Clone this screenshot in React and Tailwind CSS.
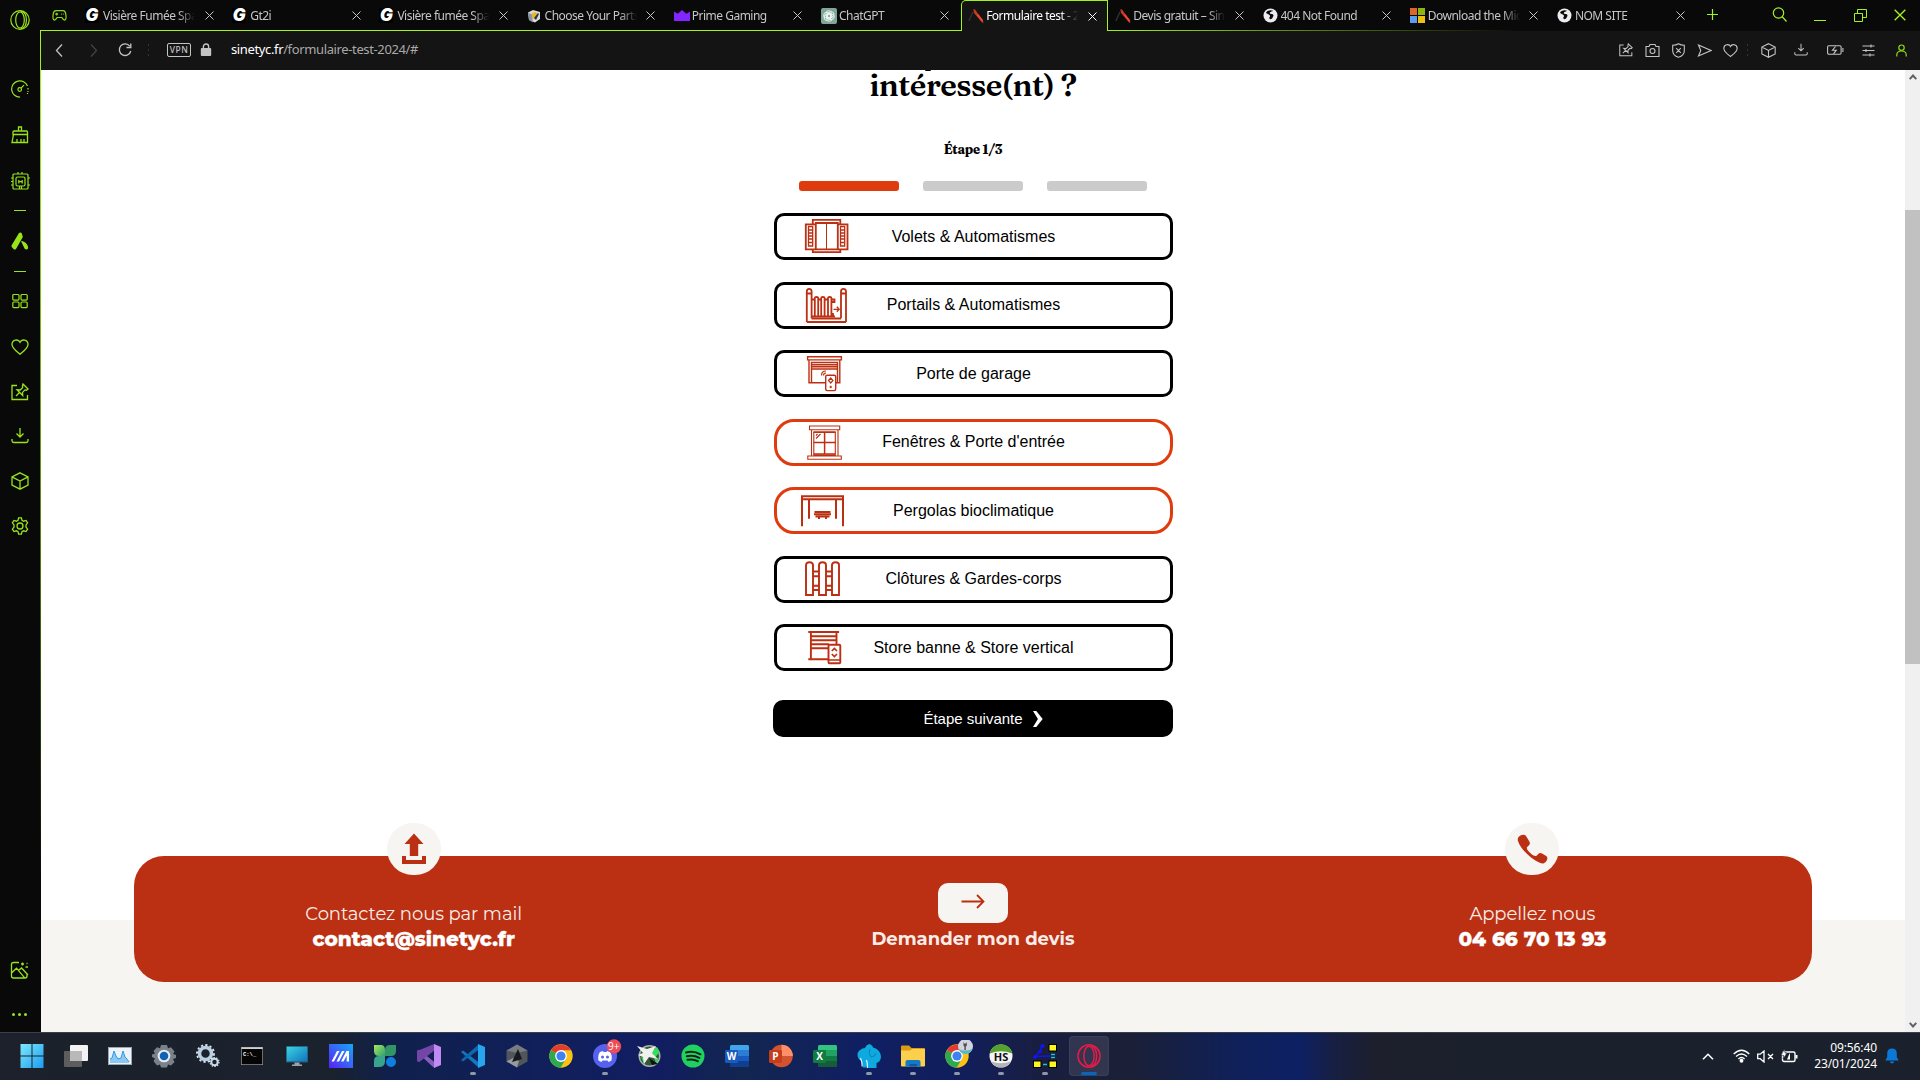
import React from "react";

const RED = "#bb2f12";

/* ---------- line icons ---------- */
function Line({ size = 18, sw = 1, vb = 18, className = "", children }) {
  return (
    <svg width={size} height={size} viewBox={`0 0 ${vb} ${vb}`} fill="none" stroke="currentColor" strokeWidth={sw} className={`shrink-0 ${className}`}>
      {children}
    </svg>
  );
}
const OperaMark = ({ w = 20, h = 20, sw = 1.2 }) => (
  <svg width={w} height={h} viewBox="0 0 20 20" preserveAspectRatio="none" fill="none" stroke="currentColor" strokeWidth={sw} className="shrink-0">
    <ellipse cx="10" cy="10" rx="9.2" ry="9.3" />
    <ellipse cx="10" cy="10" rx="4.3" ry="8.2" />
    <path d="M11 1.2c3.5.8 5.4 4.4 5.4 8.8s-1.9 8-5.4 8.8" />
  </svg>
);
const Pin = ({ size = 18 }) => (
  <Line size={size} sw={1.3}>
    <path d="M6 2.500H1v14h15.500V12" />
    <path d="M12 1l5 5-1.500 1.200-1.500-.3-2.500 2.500.2 3.100-5.700-5.700 3.200.2 2.500-2.500-.3-1.500zM8.500 9.500L5 13" />
  </Line>
);
const Download = ({ size = 18 }) => (
  <Line size={size} sw={1.3}><path d="M9 1v8.500M5.500 6.500L9 10l3.500-3.500M1 12v1.800q0 1.700 1.700 1.700h12.600q1.700 0 1.700-1.700V12" /></Line>
);
const Cube = ({ size = 18 }) => (
  <Line size={size} sw={1.3}><path d="M9 .8l8 4v8.400l-8 4-8-4V4.800zM1 4.800l8 4.200 8-4.200M9 9v8" /></Line>
);
const Heart = ({ size = 18 }) => (
  <Line size={size} sw={1.3}><path d="M9 4.200C7.500.8 1 1.200 1 6.500 1 10.500 6 13.500 9 16.200c3-2.700 8-5.700 8-9.700 0-5.300-6.500-5.700-8-2.300z" /></Line>
);
const Close = ({ s = 9 }) => (
  <svg width={s} height={s} viewBox="0 0 9 9" stroke="currentColor" strokeWidth="1" fill="none" className="shrink-0"><path d="M.5.5l8 8M8.500.5l-8 8" /></svg>
);

/* ---------- tab favicons ---------- */
const GIcon = () => (
  <span className="flex h-[15px] w-[14px] items-center justify-center bg-black font-['Inter','Liberation_Sans',sans-serif] text-[17px] leading-none font-black text-white italic">G</span>
);
const PartsIcon = () => (
  <svg width="14" height="14" viewBox="0 0 14 14"><path d="M1 3.500l5-2.500 7 2v7l-5 3.500-6-2.500z" fill="#d9dbe0" /><path d="M1 3.500l4 2 1 8-4-2.500z" fill="#8b93a5" /><path d="M5 4l4-1 2 3-3 4-3-1z" fill="#e6b91e" /><path d="M7 9l4-5 1 1-3 6z" fill="#2b3350" /></svg>
);
const Crown = () => (
  <svg width="16" height="11" viewBox="0 0 17 11" preserveAspectRatio="none"><path d="M0 1.500l3 1.800q1.500.8 2.500-.8L8.500 0l3 2.500q1 1.600 2.500.8l3-1.800V11H0z" fill="#8424ff" /></svg>
);
const Gpt = () => (
  <svg width="16" height="16" viewBox="0 0 16 16"><rect width="16" height="16" rx="2" fill="#7fa798" /><g fill="none" stroke="#eef5f2" strokeWidth=".9"><rect x="5" y="2.700" width="5.400" height="7" rx="2.700" /><rect x="5" y="2.700" width="5.400" height="7" rx="2.700" transform="rotate(60 8 8)" /><rect x="5" y="2.700" width="5.400" height="7" rx="2.700" transform="rotate(120 8 8)" /><rect x="5" y="2.700" width="5.400" height="7" rx="2.700" transform="rotate(180 8 8)" /><rect x="5" y="2.700" width="5.400" height="7" rx="2.700" transform="rotate(240 8 8)" /><rect x="5" y="2.700" width="5.400" height="7" rx="2.700" transform="rotate(300 8 8)" /></g></svg>
);
const Blade = () => (
  <svg width="16" height="16" viewBox="0 0 16 16"><path d="M5 4L.8 13" stroke="#303030" strokeWidth="1.500" /><path d="M5.300 1.200l1.800.2 3.400 5 4.600 5.800.2 3-1.500-1L9 8.500 6 5z" fill="#c43a20" /><path d="M9.500 6.500l5 6.500" stroke="#e8492a" strokeWidth="1.800" /></svg>
);
const Globe = () => (
  <svg width="15" height="15" viewBox="0 0 15 15"><circle cx="7.500" cy="7.500" r="7" fill="#ececf0" /><path d="M3 4.500c1 2 3.800 1.500 4 3.500.2 1-1 1-.6 2.400.6 1.300 2.600.7 3-.4.600-1.500 1.600-2 .8-3.300-1.200-1.300-3.400-.2-3.400-1.700 0-1.400 2.400-1.300 3.400-2.200-2.400-1.200-5.600-.6-7.200 1.700z" fill="#0a0a0a" /></svg>
);
const MsIcon = () => (
  <span className="grid h-[15px] w-[15px] grid-cols-2 grid-rows-2 gap-px">
    <i className="bg-[#dd6527]" /><i className="bg-[#8db510]" /><i className="bg-[#5a9cf0]" /><i className="bg-[#f0be12]" />
  </span>
);

const TABS = [
  ["Visière Fumée Spa", GIcon], ["Gt2i", GIcon], ["Visière fumée Spa", GIcon], ["Choose Your Parts", PartsIcon],
  ["Prime Gaming", Crown], ["ChatGPT", Gpt], ["Formulaire test - 2", Blade, true], ["Devis gratuit – Sin", Blade],
  ["404 Not Found", Globe], ["Download the Mic", MsIcon], ["NOM SITE", Globe],
];

function Tab({ label, Icon, active }) {
  return (
    <div className={active
      ? "flex h-[31px] w-[147.200px] shrink-0 items-center rounded-tl-[5px] border-t border-r border-l border-[#a4f31c] bg-[#141414] pl-[6px] text-white"
      : "flex h-[31px] w-[147.200px] shrink-0 items-center pl-[7px] text-[#c6c6c6]"}>
      <span className="flex w-[18px] shrink-0 items-center">{<Icon />}</span>
      <span className="w-[96px] overflow-hidden mask-r-from-78% mask-r-to-96% text-[12px] tracking-[-0.500px] whitespace-nowrap">{label}</span>
      <span className="ml-[5.500px] flex"><Close /></span>
    </div>
  );
}

function TabStrip() {
  return (
    <div className="flex h-[31px] shrink-0 bg-[linear-gradient(to_right,#a4f31c_0,#a4f31c_1066px,transparent_1480px)] bg-[length:100%_1px] bg-bottom bg-no-repeat text-[#a4f31c]">
      <div className="flex h-[30px] w-[37px] shrink-0 items-center justify-center">
        <svg width="15" height="11" viewBox="0 0 15 11" fill="none" stroke="#8ada17" strokeWidth="1.200"><path d="M4 .7h7c2 0 2.500 1.300 2.800 3.500.3 2 .5 4.300-.3 5.300-1.500 1.500-2.500-.5-3.700-2H5.200C4 9 3 11 1.500 9.500.700 8.500.900 6.200 1.200 4.200 1.500 2 2 .700 4 .700z" /><path d="M3.200 4.200h3M4.700 2.800v2.800M9 4.200h.8M10.800 4.200h.8" /></svg>
      </div>
      {TABS.map(([l, I, a], i) => <Tab key={i} label={l} Icon={I} active={a} />)}
      <div className="flex h-[28px] w-[30px] shrink-0 items-center justify-center">
        <Line size={11} vb={11} sw={1.200}><path d="M5.500 0v11M0 5.500h11" /></Line>
      </div>
      <div className="ml-auto flex h-[30px]">
        <span className="flex w-10 items-center justify-center pr-px pb-px"><Line size={15} vb={15} sw={1.200}><circle cx="6.500" cy="6" r="5.200" /><path d="M10 9.500l4.500 5" /></Line></span>
        <span className="flex w-10 items-end justify-center pb-[9px]"><i className="h-px w-3 bg-[#a4f31c]" /></span>
        <span className="flex w-10 items-center justify-center"><Line size={13} vb={13} sw={1}><path d="M.5 4.500h8v8h-8zM3.500 4.500v-4h9v8h-4" /></Line></span>
        <span className="flex w-10 items-center justify-center"><Close s={12} /></span>
      </div>
    </div>
  );
}

const Dots = () => <i className="flex flex-col gap-[3px]"><b className="h-[2px] w-px bg-[#333]" /><b className="h-[2px] w-px bg-[#333]" /><b className="h-[2px] w-px bg-[#333]" /></i>;

function AddressBar() {
  const cell = "flex h-full items-center justify-center shrink-0";
  return (
    <div className="flex h-[39px] shrink-0 items-center bg-[#141414] pb-px text-[#c4c4c4]">
      <span className={`${cell} w-[36px]`}><Line size={13} vb={13} sw={1.300}><path d="M9 .5L3.500 6.500 9 12.500" /></Line></span>
      <span className={`${cell} w-[32px] text-[#444]`}><Line size={13} vb={13} sw={1.300}><path d="M4 .5l5.500 6L4 12.500" /></Line></span>
      <span className={`${cell} w-[32px]`}><Line size={14} vb={14} sw={1.300}><path d="M11.800 3.200A5.800 5.800 0 1 0 12.800 8M12.800.5v4H8.500" /></Line></span>
      <span className={`${cell} w-[14px]`}><Dots /></span>
      <span className="ml-[12px] flex h-[14px] w-[24px] items-center justify-center rounded-[2px] border border-[#c4c4c4] text-[8.500px] leading-none font-medium tracking-[0.500px]">VPN</span>
      <svg width="12" height="14" viewBox="0 0 12 14" className="ml-[9px]"><rect x=".8" y="5" width="10.400" height="8" rx="1" fill="#c4c4c4" /><path d="M3.400 5.500V3.600a2.600 2.600 0 0 1 5.200 0v1.900" fill="none" stroke="#c4c4c4" strokeWidth="1.400" /></svg>
      <span className="ml-[19px] text-[13px] tracking-[-0.370px] whitespace-nowrap text-[#a9a9a9]"><span className="text-white">sinetyc.fr</span>/formulaire-test-2024/#</span>
      <div className="ml-auto flex h-full items-center pr-px">
        <span className={`${cell} w-[26px]`}><Pin size={14} /></span>
        <span className={`${cell} w-[26px]`}><Line size={15} vb={15} sw={1.100}><path d="M1 3.500h3l1-2h5l1 2h3v10H1z" /><circle cx="7.500" cy="8" r="2.500" /></Line></span>
        <span className={`${cell} w-[26px]`}><Line size={15} vb={15} sw={1.100}><path d="M7.500.8c1.500 1 4 1.500 5.800 1.500v5.500c0 3.500-2.500 5.500-5.800 6.500-3.300-1-5.800-3-5.800-6.500V2.300C3.500 2.300 6 1.800 7.500.8zM5.200 5.200l4.600 4.600M9.800 5.200L5.200 9.800" /></Line></span>
        <span className={`${cell} w-[26px]`}><Line size={15} vb={15} sw={1.100}><path d="M1.500 2l12.500 5.500L1.500 13l2.300-5.500z" /></Line></span>
        <span className={`${cell} w-[26px]`}><Heart size={15} /></span>
        <span className={`${cell} w-[8px]`}><Dots /></span>
        <span className={`${cell} w-[34px]`}><Cube size={15} /></span>
        <span className={`${cell} w-[32px]`}><Download size={14} /></span>
        <span className={`${cell} w-[36px]`}><svg width="17" height="10" viewBox="0 0 17 10" fill="none" stroke="currentColor" strokeWidth="1.100"><rect x=".6" y=".8" width="13.500" height="8.400" rx="1.200" /><path d="M15.900 3v4M8.500 1.500L5.500 5.200h3.800L6.500 8.800" /></svg></span>
        <span className={`${cell} w-[30px]`}><Line size={13} vb={13} sw={1.100}><path d="M.5 2h12M.5 6.500h12M.5 11h12M9 .5v3M4 5v3M8 9.500v3" /></Line></span>
        <span className={`${cell} w-[36px] text-[#8ada17]`}><Line size={13} vb={13} sw={1.200}><circle cx="6.500" cy="3.700" r="2.700" /><path d="M1.800 12.500V11c0-3 2-4 4.700-4s4.700 1 4.700 4v1.500" /></Line></span>
      </div>
    </div>
  );
}

function Sidebar() {
  const c = "flex shrink-0 items-center justify-center pr-px";
  return (
    <aside className="flex w-[40px] shrink-0 flex-col bg-[#090909] text-[#98e41b]">
      <div className={`${c} mb-[26px] h-[40px]`}><OperaMark sw={1.200} /></div>
      <div className={`${c} h-[46px]`}><Line sw={1.200}><path d="M9 17.200A8.200 8.200 0 1 1 16.500 6" /><path d="M17 8v1.500M17 11v1M16.500 13v1" /><circle cx="8.700" cy="9.500" r="1.800" /><path d="M10 8.200l3-3" /></Line></div>
      <div className={`${c} h-[46px]`}><Line sw={1.300}><path d="M7.500 5V1h3v4M3 5h12.500q1 0 1 1v2.500H2V6q0-1 1-1zM2.500 8.500L1 16.500h15.500v-8M6 16.500V13M10 16.500V13M13 16.500V13" /></Line></div>
      <div className={`${c} h-[46px] pl-[2px]`}><Line size={19} vb={19} sw={1.200}><rect x="2" y="2" width="15" height="15" rx="1" /><rect x="5" y="5" width="9" height="9" rx="1.500" /><path d="M7.800 8v3.500M11.200 8v3.500M7.800 9.700h3.400M7 0v2M11 0v2M0 6h2M0 9.500h2M0 13h2M17 6h2M17 13h2M8.500 14v3M10.500 14v3" /></Line></div>
      <div className={`${c} h-[12px]`}><i className="h-px w-3 bg-current" /></div>
      <div className={`${c} h-[50px]`}><svg width="18" height="18" viewBox="0 0 18 18" fill="#98e41b"><path d="M8 1q2-1.200 3 1l.8 3L5 17q-1 1.200-2.500 0L.8 15q-.6-1 0-2z" /><path d="M10 9q3.800 0 6 3.500 1.500 2.500 1 4-1.500 2-3.500 0z" /></svg></div>
      <div className={`${c} h-[10px]`}><i className="h-px w-3 bg-current" /></div>
      <div className={`${c} h-[50px]`}><Line size={16} vb={16} sw={1.200}><rect x=".8" y="1.500" width="6.200" height="5.600" rx="1" /><rect x="9" y="1.500" width="6.200" height="5.600" rx="1" /><rect x=".8" y="9" width="6.200" height="5.600" rx="1" /><rect x="9" y="9" width="6.200" height="5.600" rx="1" /></Line></div>
      <div className={`${c} h-[42px]`}><Heart /></div>
      <div className={`${c} h-[48px]`}><Pin /></div>
      <div className={`${c} h-[40px]`}><Download /></div>
      <div className={`${c} h-[50px]`}><Cube /></div>
      <div className={`${c} h-[40px]`}><Line sw={1.300}><path d="M7 3.300L7.600.8h2.800l.6 2.500 1.500.9 2.500-.8 1.600 2.400L15 7.900v2.200l1.600 2.100-1.600 2.400-2.500-.8-1.500.9-.6 2.500H7.600L7 14.700l-1.500-.9-2.500.8-1.600-2.400L3 10.100V7.900L1.400 5.800 3 3.400l2.500.8z" /><circle cx="9" cy="9" r="3" /></Line></div>
      <div className={`${c} mt-auto h-[52px]`}><Line size={19} vb={19} sw={1.300}><path d="M9 1.500H3.500Q1.500 1.500 1.500 3.500v11.500q0 2 2 2H15q2 0 2-2v-1.500M1.500 12l5-4.800 8 9.500M8.500 9.500l3-2.500 6.500 7M11 3h3M12.500 1.500v3M15.500 6h2.500M16.500 2.500h1" /></Line></div>
      <div className={`${c} h-[36px] gap-[3px]`}><i className="h-[3px] w-[3px] rounded-full bg-current" /><i className="h-[3px] w-[3px] rounded-full bg-current" /><i className="h-[3px] w-[3px] rounded-full bg-current" /></div>
    </aside>
  );
}

/* ---------- product pictograms ---------- */
function Picto({ children, sw = 1.600 }) {
  return <svg width="50" height="37" viewBox="0 0 50 37" fill="none" stroke={RED} strokeWidth={sw}>{children}</svg>;
}
const Shutters = () => (
  <Picto sw={1.800}>
    <path d="M12.800 6V1.900h27.500V6M12.800 31v3.200h27.500V31M15.800 31.300V5h22v26.300z" />
    <path d="M26.500 5v26" strokeWidth="1" />
    <path d="M15.500 6.300H5.800v25h9.700M38 6.300h9.500v25H38" />
    <path d="M8.500 8.500h4.200v19.500H8.500zM40.500 8.500h4.200v19.500h-4.200zM8.500 12h4M8.500 15h4M8.500 18h4M8.500 21h4M8.500 24.500h4M40.500 12h4M40.500 15h4M40.500 18h4M40.500 21h4M40.500 24.500h4" strokeWidth="1.300" />
  </Picto>
);
const Gate = () => (
  <Picto sw={1.800}>
    <path d="M6.800 35V4.500Q6.800 1.800 9.200 1.800t2.400 2.700v26.800M41 31.300V4.500q0-2.700 2.500-2.700T46 4.500V35M6.800 6.500h5M41 6.500h5M6.800 35H46M11.500 31.500H41" />
    <path d="M14.800 29V11q0-1 1.700-1t1.700 1v18M21.200 29V11q0-1 1.700-1t1.700 1v18M28 29V11q0-1 1.700-1t1.700 1v18M12 12.500h3M18.500 12.500h3M24.500 12.500h3.500M31.500 12.500h3v2.500h-3M12 29.500h23M33 26v3" strokeWidth="1.800" />
    <path d="M33.500 22.300h5.500M36.800 19.800l2.400 2.500-2.400 2.500" strokeWidth="1.300" />
  </Picto>
);
const Garage = () => (
  <Picto sw={1.400}>
    <path d="M7.600 1.700h33.800v3.200H7.600zM9 5v22.700h16.500M39.800 5v22.700h-4M11.500 20V7.500h26V20M11.500 9.700h26M11.500 11.800h26M11.500 14h26M11.500 7.500v20M37.500 14v13.500" />
    <rect x="25.700" y="20.300" width="10" height="15.300" rx="1.500" fill="#fff" />
    <path d="M28.500 25.500l2.200-2.500 2.200 2.500-2.200 2.500zM29.500 32h2.500M30.700 30.800v2.500M21.500 20.500q0-4.500 4.500-4.500M23.500 20.500q0-2.500 2.500-2.500" strokeWidth="1.200" />
  </Picto>
);
const Window = () => (
  <Picto sw={1.100}>
    <path d="M9.500 2h30.200v3.700H9.500zM11.500 5.700v26M38 5.700v26M13.800 31V8h21.500v23zM7.800 32h33.500v3.200H7.800zM16 14.500l4.500-4.500M16 11.500l1.500-1.500" />
    <path d="M24.600 8v22.500M13.800 18.500h21.500M13.800 8.200h21.500M13.800 30h21.500" strokeWidth="1.500" />
  </Picto>
);
const Pergola = () => (
  <Picto sw={2}>
    <path d="M2 34.300V4.200h41v30.100M2 7.300h41M9 8v18.700M36 8v18.700M14.500 20h16M14 22.300h17M15.500 24.500h14M19 24v3M26 24v3" />
  </Picto>
);
const Fence = () => (
  <Picto sw={1.900}>
    <path d="M6 34V4Q6 1.200 9.500 1.200T13 4v30zM19 34V4q0-2.800 3.500-2.800T26 4v30zM32 34V4q0-2.800 3.500-2.800T39 4v30zM13 10.500h6M13 15.200h6M13 24.800h6M13 29h6M26 10.500h6M26 15.200h6M26 24.800h6M26 29h6" />
  </Picto>
);
const Blind = () => (
  <Picto sw={1.900}>
    <path d="M8.300 3h30.800M10.900 3v27.300M36.500 3v12M11 7.200h25.500M11 11.200h25.500M11 15.200h18M11 19.200h17M8.300 30.300H28" />
    <rect x="28.500" y="15.700" width="11.800" height="18.500" rx="1" fill="#fff" />
    <path d="M31.800 22l2.600-2.500L37 22M31.800 25l2.600 2.500L37 25M28.500 31h11.800" strokeWidth="1.700" />
  </Picto>
);

const OPTIONS = [
  ["Volets & Automatismes", Shutters], ["Portails & Automatismes", Gate], ["Porte de garage", Garage],
  ["Fenêtres & Porte d'entrée", Window, true], ["Pergolas bioclimatique", Pergola, true],
  ["Clôtures & Gardes-corps", Fence], ["Store banne & Store vertical", Blind],
];

function Option({ label, Icon, on }) {
  return (
    <button className={on
      ? "grid h-[47px] w-[399px] items-center rounded-[20px] border-3 border-[#e03b0e] bg-white text-black"
      : "grid h-[47px] w-[399px] items-center rounded-[10px] border-3 border-black bg-white text-black"}>
      <span className="col-start-1 row-start-1 ml-[23px] justify-self-start"><Icon /></span>
      <span className="col-start-1 row-start-1 justify-self-center text-[16px] leading-5">{label}</span>
    </button>
  );
}

function ContactCard() {
  const badge = "absolute top-[-33px] left-1/2 flex h-[52px] w-[54px] -translate-x-1/2 items-center justify-center rounded-full bg-[#f7f5f2]";
  return (
    <div className="mx-[93px] -mt-[64px] grid h-[126px] grid-cols-3 rounded-[30px] bg-[#bb2f12] text-center font-['Montserrat','Inter','Liberation_Sans',sans-serif] text-[#f9ede9]">
      <div className="relative pt-[45px]">
        <span className={`${badge} pb-[2px]`}><svg width="26" height="31" viewBox="0 0 26 31" fill={RED}><path d="M13 .5L22.500 11h-5.300v12H8.800V11H3.500zM1 23h4v4h16v-4h4v8H1z" /></svg></span>
        <p className="text-[18px] leading-[26px] font-normal tracking-[-0.080px]">Contactez nous par mail</p>
        <p className="mt-[-1px] text-[20px] leading-[26px] font-extrabold text-white [-webkit-text-stroke:0.300px_white]">contact@sinetyc.fr</p>
      </div>
      <div className="flex flex-col items-center pt-[27px]">
        <span className="flex h-[40px] w-[70px] items-center justify-center rounded-[10px] bg-[#f7f5f2] pb-[3px]"><svg width="24" height="15" viewBox="0 0 24 15" fill="none" stroke={RED} strokeWidth="1.800"><path d="M.5 7.500h22M16 1l6.500 6.500L16 14" /></svg></span>
        <p className="mt-[3px] text-[18px] leading-[26px] font-bold">Demander mon devis</p>
      </div>
      <div className="relative pt-[45px]">
        <span className={badge}><svg width="31" height="30" viewBox="0 0 31 30" fill={RED}><path d="M1.500 3Q4 .5 7 .8q1.500.2 2.500 2l3 5q1 2-.5 3.400l-2 2q-.8 1.500 1.500 4t4.500 4q2.500 1.500 3.800.3l1.700-1.700q1.500-1.300 3.500-.3l4.200 2.500q1.800 1.500.8 4-1 2.500-3.500 3.500-4.500 0-12.500-6Q3.500 15 .8 6.500.5 4.500 1.500 3z" /></svg></span>
        <p className="text-[18px] leading-[26px] font-normal tracking-[-0.080px]">Appellez nous</p>
        <p className="mt-[-1px] text-[20px] leading-[26px] font-extrabold text-white [-webkit-text-stroke:0.300px_white]">04 66 70 13 93</p>
      </div>
    </div>
  );
}

function Page() {
  return (
    <main className="flex grow flex-col overflow-hidden bg-white font-['Liberation_Sans',Arial,sans-serif]">
      <div className="flex h-[850px] shrink-0 flex-col items-center">
        <i className="mr-[90px] h-px w-[6px] rounded-b bg-black" />
        <h1 className="mt-px h-[27px] font-['Fraunces','Lora','Liberation_Serif',serif] text-[31px] leading-[27px] font-semibold tracking-[-0.550px] whitespace-nowrap text-black">intéresse(nt) ?</h1>
        <p className="mt-[40px] h-[20px] font-['Fraunces','Lora','Liberation_Serif',serif] text-[13px] leading-[20px] font-bold tracking-[-0.250px]">Étape 1/3</p>
        <div className="mt-[22px] flex gap-[24px]">
          <i className="h-[10px] w-[100px] rounded-[3px] bg-[#e03b0e]" /><i className="h-[10px] w-[100px] rounded-[3px] bg-[#cbcbcb]" /><i className="h-[10px] w-[100px] rounded-[3px] bg-[#cbcbcb]" />
        </div>
        <div className="mt-[22.400px] ml-px flex flex-col gap-[21.500px]">
          {OPTIONS.map(([l, I, on]) => <Option key={l} label={l} Icon={I} on={on} />)}
        </div>
        <button className="mt-[28.600px] flex h-[37px] w-[400px] items-center justify-center gap-[10px] rounded-[10px] bg-black pt-px pl-[20px] text-[15px] text-white">
          <span>Étape suivante</span>
          <svg width="10" height="16" viewBox="0 0 10 16" fill="#fff"><path d="M0 0h3.300L9.700 8l-6.400 8H0l4.900-8z" /></svg>
        </button>
      </div>
      <div className="h-[112px] bg-[#f7f5f2]"><ContactCard /></div>
    </main>
  );
}

function Scrollbar() {
  return (
    <div className="flex w-[15px] shrink-0 flex-col items-center bg-[#f0f0f0]">
      <svg width="8" height="6" viewBox="0 0 8 6" className="mt-[4px]" fill="none" stroke="#606060" strokeWidth="2"><path d="M.7 5.200L4 1.500l3.300 3.700" /></svg>
      <i className="mt-[130px] h-[454px] w-full bg-[#c1c1c1]" />
      <svg width="8" height="6" viewBox="0 0 8 6" className="mt-auto mb-[4px]" fill="none" stroke="#606060" strokeWidth="2"><path d="M.7.8L4 4.500 7.300.8" /></svg>
    </div>
  );
}

/* ---------- taskbar ---------- */
function App24({ children }) {
  return <svg width="24" height="24" viewBox="0 0 24 24" className="shrink-0">{children}</svg>;
}
const Office = ({ letter, c }) => (
  <App24>
    {letter === "P" ? <><circle cx="12.500" cy="12" r="11.300" fill={c[1]} /><path d="M12.500.7A11.300 11.300 0 0 1 23.800 12H12.500z" fill={c[0]} /></> :
      <><rect x="5" y="1" width="19" height="22" rx="1.500" fill={c[2]} /><path d="M6.500 1h16Q24 1 24 2.500V6.500H5V2.500Q5 1 6.500 1z" fill={c[0]} /><path d="M5 6.500h19V12H5z" fill={c[1]} /><path d="M5 17h19v4.500q0 1.500-1.500 1.500h-16Q5 23 5 21.500z" fill={c[3]} /></>}
    <rect x="0" y="6" width="13" height="13" rx="1.200" fill={c[4]} />
    <text x="6.500" y="16" textAnchor="middle" fontSize="10" fontWeight="700" fill="#fff" fontFamily="Open Sans, sans-serif">{letter}</text>
  </App24>
);
const Chrome = ({ avatar }) => (
  <svg width="32" height="32" viewBox="-4 -4 32 32" className="shrink-0">
    <circle cx="12" cy="12" r="11.700" fill="#fbc116" />
    <path d="M12 12L1.900 6.200A11.700 11.700 0 0 1 22.100 6.200H12z" fill="#e33b2e" />
    <path d="M1.900 6.200A11.700 11.700 0 0 0 11.500 23.700L17 14.800 12 12z" fill="#2da94f" />
    <circle cx="12" cy="12" r="5.900" fill="#fff" /><circle cx="12" cy="12" r="4.600" fill="#3e82f1" />
    {avatar && <><circle cx="20.500" cy="2.500" r="7.500" fill="#cfd3e2" /><path d="M13.500 5q6.500 3 14 0-2.500 5-7 5t-7-5z" fill="#59b9bb" /><path d="M18.500-2l.8 1.500h1.700l.8-1.500v3.500l-1 1v3.500h-1.400v-3.500l-.9-1z" fill="#544a3d" /></>}
  </svg>
);

const APPS = [
  [<App24><defs><linearGradient id="win" x1="0" y1="0" x2="1" y2="1"><stop offset="0" stopColor="#7ee8fb" /><stop offset="1" stopColor="#1a9cf2" /></linearGradient></defs><path d="M.5 0h11v11.500H.5zM12.500 0h11v11.500h-11zM.5 12.500h11V24H.5zM12.500 12.500h11V24h-11z" fill="url(#win)" /></App24>],
  [<App24><rect x="0" y="7" width="18" height="16" rx="1" fill="#5d5d5d" /><rect x="6" y="1" width="18" height="16" rx="1" fill="#f3f3f3" /><rect x="6" y="7" width="12" height="10" fill="#b9b9b9" /></App24>],
  [<App24><rect x="0" y="3" width="24" height="18" fill="#9aa8b4" /><rect x="1" y="4" width="22" height="16" fill="#eef3f7" /><path d="M2 19v-4l2-1 2-7 2 5 2 3 3-1 2-7 2 6 2 2 2 4z" fill="#8cc8f2" /><path d="M2 15l2-1 2-7 2 5 2 3 3-1 2-7 2 6 2 2 2 3" fill="none" stroke="#2e9be5" strokeWidth="1" /></App24>],
  [<App24><path d="M9 1h6l1 3.200 3-1 3.500 4.300L21 10l3 1v3l-3 1 1.500 3-3.500 3.500-3-1L15 23.500H9L8 20.500l-3 1L1.500 17 3 14.500 0 13v-2.500L3 9.500 1.500 7 5 3.200l3 1z" fill="#79828b" /><circle cx="12" cy="12" r="6.300" fill="#e9edf0" /><circle cx="12" cy="12" r="4.300" fill="#0f63b5" /></App24>],
  [<App24><g fill="none"><circle cx="9.500" cy="9.500" r="6" stroke="#b9d0e0" strokeWidth="3.500" /><circle cx="9.500" cy="9.500" r="8.500" stroke="#dce8f0" strokeWidth="1.800" strokeDasharray="2.200 2.200" /><circle cx="18.500" cy="18" r="3.200" stroke="#c8dae6" strokeWidth="2" /><circle cx="18.500" cy="18" r="4.500" stroke="#dce8f0" strokeWidth="1.200" strokeDasharray="1.400 1.400" /></g></App24>],
  [<App24><rect x="1" y="3" width="22" height="18" fill="#9b9b9b" /><rect x="1.700" y="5" width="20.600" height="15.300" fill="#050505" /><rect x="1.700" y="3.500" width="20.600" height="1.300" fill="#dedede" /><text x="3" y="12" fontSize="5.500" fill="#fff" fontFamily="Liberation Mono, monospace" fontWeight="700">C:\_</text></App24>],
  [<App24><defs><linearGradient id="desk" x1="0" y1="0" x2="1" y2="1"><stop offset="0" stopColor="#3bd3e4" /><stop offset="1" stopColor="#0f74bd" /></linearGradient></defs><rect x="1" y="2" width="22" height="16.500" rx="1" fill="#255a76" /><rect x="1.800" y="2.800" width="20.400" height="14.600" fill="url(#desk)" /><path d="M9.500 18.500h5v2H17v1.500H7v-1.500h2.500z" fill="#99a3ab" /></App24>],
  [<App24><defs><linearGradient id="mm" x1="0" y1="1" x2="1" y2="0"><stop offset="0" stopColor="#5a20f5" /><stop offset="1" stopColor="#16a8f8" /></linearGradient></defs><rect width="24" height="24" fill="url(#mm)" /><path d="M2.500 17.500L8 7h2.500L5 17.500zM7.500 17.500L13 7h2.500L10 17.500zM12 17.500L17.500 7H20v10.500h-2.300v-6l-3.200 6z" fill="#fff" /></App24>],
  [<App24><defs><linearGradient id="clv" x1="0" y1="0" x2="1" y2="1"><stop offset="0" stopColor="#a9e85b" /><stop offset="1" stopColor="#2ea073" /></linearGradient></defs><path d="M1 1h7q4 0 4 5v6H6Q1 12 1 7z" fill="url(#clv)" /><path d="M12 12V6q0-5 5-5h6v6q0 5-5 5z" fill="#319566" /><path d="M12 12v5q0 6-6 6H1v-6q0-5 5-5z" fill="#38a48b" /><circle cx="18" cy="18" r="5" fill="#0f7fe0" /></App24>],
  [<App24><path d="M0 7l2-1.200 16 12.700V24L15.500 22.500 0 8z" fill="#8a5cc0" /><path d="M0 7v10l2 1.200L18 6V0L16 .5z" fill="#7245a6" /><path d="M17 0l7 3v18l-7 3z" fill="#c08af2" /></App24>],
  [<App24><path d="M0 8l2-1.500 16 12V24z" fill="#1277bf" /><path d="M0 16l2 1.500 16-12V0z" fill="#0d68ae" /><path d="M17 0l7 3v18l-7 3z" fill="#27a5ee" /></App24>, "run"],
  [<App24><path d="M12 .5l10.500 6v11L12 23.500l-10.500-6v-11z" fill="#51565c" /><path d="M12 .5l10.500 6L12 9 1.500 6.500z" fill="#767c82" /><path d="M12 23.500l-10.500-6L8 14l6 3z" fill="#969ba0" /><path d="M13 5l4 10-10 3z" fill="#17191c" /></App24>],
  [<Chrome />],
  [<svg width="36" height="36" viewBox="-6 -6 36 36" className="shrink-0"><circle cx="12" cy="12" r="12" fill="#5662ee" /><path d="M5.500 16.500Q4.500 11 7 8l3-1 .5 1h3l.5-1 3 1q2.500 3 1.500 8.500l-3 1.500-1-1.500h-5L8.500 18z" fill="#fff" /><circle cx="9.500" cy="13" r="1.500" fill="#5662ee" /><circle cx="14.500" cy="13" r="1.500" fill="#5662ee" /><circle cx="21" cy="2.500" r="7.200" fill="#ee4d57" /><text x="20.800" y="6" fontSize="10" fill="#fff" textAnchor="middle" fontFamily="Open Sans, sans-serif">9+</text></svg>, "run"],
  [<App24><circle cx="12.500" cy="12" r="11" fill="#a9b5a6" /><circle cx="12.500" cy="12" r="9.500" fill="#35543c" /><path d="M14 8l6-5 2.500 5-4 5zM4 13l4 1-1 6zM17 14l5 1-3 4z" fill="#32e05a" /><path d="M0 2l10 3 9-3-4 7 6 6-9-2-5 7-1-7-5-2 5-2z" fill="#f0f1ec" /><path d="M12 14l9 6-6 1z" fill="#111" /></App24>],
  [<App24><circle cx="12" cy="12" r="11.500" fill="#1fd25f" /><path d="M5 8.500q7.500-2 14.500 1.800M5.800 12.300q6.500-1.700 12.500 1.600M6.500 15.800q5.500-1.300 10.300 1.400" stroke="#12231a" strokeWidth="2" strokeLinecap="round" fill="none" /></App24>],
  [<Office letter="W" c={["#41a5ee", "#2b7cd3", "#185abd", "#103f91", "#185abd"]} />],
  [<Office letter="P" c={["#ff8f6b", "#d35230", "", "", "#c43e1c"]} />],
  [<Office letter="X" c={["#33c481", "#21a366", "#107c41", "#185c37", "#107c41"]} />],
  [<App24><path d="M12 0q3.500 1 4 3.500 7.500 2 8 9.500-.5 5-4.500 6V24h-9l-.3-3-.7 2.500H6l-1.500-6.500Q0 15 .5 9.500 2.500 4.500 8 4q1-3 4-4z" fill="#0da9df" /><path d="M3.500 14q2 5 1.500 8.500M9.500 16q1.200 4 .8 8" stroke="#eefaff" strokeWidth="1.100" fill="none" /><path d="M13 5q-2 5 1 8 4 0 5-4" stroke="#0784b5" fill="none" strokeWidth="1" /></App24>, "run"],
  [<App24><path d="M0 2.500Q0 1.500 1 1.500h7l2.500 2.500H23q1 0 1 1V12H0z" fill="#dd9a13" /><path d="M0 6.500h9l2-1.500h13v16.500q0 1-1 1H1q-1 0-1-1z" fill="#fccf4d" /><path d="M4.500 22.500V18q0-2 2-2h11q2 0 2 2v4.500z" fill="#1778c5" /><path d="M8.500 20h7.500v2.500H8.500z" fill="#0f5a9c" /></App24>, "run"],
  [<Chrome avatar />, "run"],
  [<App24><circle cx="12" cy="12" r="11.500" fill="#f4f4f4" /><path d="M.7 9.500A11.500 11.500 0 0 1 23.300 9.500Q12 5 .7 9.500z" fill="#54a22c" /><path d="M2 17.500a11.500 11.500 0 0 0 20 0Q12 21 2 17.500z" fill="#b4b4b4" /><text x="12" y="16.500" fontSize="11" fontWeight="700" textAnchor="middle" fill="#111" fontFamily="Open Sans, sans-serif">HS</text></App24>, "run"],
  [<App24><path d="M9 1L7 8 1.500 12.500 17 12" stroke="#1414f0" strokeWidth="1.600" fill="none" /><circle cx="9.500" cy="2" r="2" fill="#1414f0" /><circle cx="7" cy="7.500" r="1.800" fill="#1414f0" /><circle cx="2" cy="13" r="2" fill="#1414f0" /><g fill="#fbf718" stroke="#000" strokeWidth="1"><rect x="16" y=".5" width="7.500" height="6.500" /><rect x=".5" y="17" width="7.500" height="6.500" /><rect x="16" y="17" width="7.500" height="6.500" /></g><path d="M18 10.500h4M18 13.500h4M10 20.500h4" stroke="#16c5c8" strokeWidth="1.500" /></App24>, "run"],
  [<span className="flex text-[#e21b48]"><OperaMark w={24} h={24} sw={1.300} /></span>, "active"],
];

function TaskIcon({ icon, state }) {
  return (
    <div className="relative flex h-full w-[44.040px] shrink-0 items-center justify-center">
      {state === "active" && <i className="absolute inset-x-[2px] top-[3px] bottom-[4px] rounded-[4px] border border-white/5 bg-white/10" />}
      <span className="relative mb-px flex h-[24px] w-[24px] items-center justify-center">{icon}</span>
      {state === "run" && <i className="absolute bottom-[5px] h-[3px] w-[6px] rounded-full bg-[#8f98a8]" />}
      {state === "active" && <i className="absolute bottom-[5px] h-[3px] w-[16px] rounded-full bg-[#0667bd]" />}
    </div>
  );
}

function Taskbar() {
  return (
    <div className="flex h-[48px] shrink-0 items-center border-t border-[#3a3f4b] bg-[linear-gradient(to_right,#1c212b_0,#1a222d_330px,#10204c_390px,#111f5c_560px,#111d60_660px,#12264f_740px,#101f63_860px,#111e5c_960px,#191e41_1040px,#1b2037_1130px,#0f205a_1240px,#0d2063_1300px,#171f42_1335px,#1d1f2d_1375px,#1a212c_1500px,#1b212c_100%)] pl-[10.300px]">
      {APPS.map(([icon, state], i) => <TaskIcon key={i} icon={icon} state={state} />)}
      <div className="ml-auto flex h-full items-center pb-px text-white">
        <svg width="12" height="7" viewBox="0 0 12 7" fill="none" stroke="#fff" strokeWidth="1.500"><path d="M1 6.300L6 1.200l5 5.100" /></svg>
        <svg width="17" height="14" viewBox="0 0 17 14" fill="none" stroke="#fff" strokeWidth="1.300" className="ml-[19px]"><path d="M.7 5Q8.500-2.500 16.300 5M3 7.500q5.500-5 11 0M5.400 9.900q3.100-2.700 6.200 0" /><circle cx="8.500" cy="11.700" r="1.300" fill="#fff" /></svg>
        <svg width="17" height="13" viewBox="0 0 17 13" fill="none" stroke="#fff" strokeWidth="1.300" className="ml-[7px]"><path d="M.7 4.200h2.500L7 1v11L3.200 8.700H.7zM11 4l5 5M16 4l-5 5" /></svg>
        <svg width="17" height="14" viewBox="0 0 17 14" className="ml-[7px]"><rect x="1.500" y="3" width="12.500" height="9.500" rx="1.500" fill="none" stroke="#fff" strokeWidth="1.400" /><path d="M14.500 6h2v3.500h-2zM6 10.500l2.500-6H9v6z" fill="#fff" /><path d="M3.500 0L0 6.500h2.500L2 10l4-6H4z" fill="#fff" stroke="#1b212c" strokeWidth=".6" /></svg>
        <div className="ml-[8px] w-[71px] text-right text-[12px] leading-[16px] tracking-[-0.100px] whitespace-nowrap"><p>09:56:40</p><p>23/01/2024</p></div>
        <svg width="14" height="16" viewBox="0 0 14 16" className="mr-[21px] ml-[8px]" fill="#0a78d6"><path d="M7 .5q4.800 0 4.800 5v3.700l2 3.300H.2l2-3.300V5.500Q2.200.5 7 .5zM4.800 13.500h4.400q-.5 2-2.200 2t-2.200-2z" /></svg>
      </div>
    </div>
  );
}

export default function App() {
  return (
    <div className="flex h-[1080px] w-[1920px] flex-col overflow-hidden bg-[#090909] font-['Noto_Sans','Open_Sans',sans-serif]">
      <div className="flex h-[1032px] shrink-0">
        <Sidebar />
        <div className="mt-[30px] w-px shrink-0 bg-[linear-gradient(to_bottom,#a4f31c_0,#94e01a_130px,#5b8a14_480px,#090909_850px)]" />
        <div className="flex w-[1879px] shrink-0 flex-col">
          <TabStrip />
          <AddressBar />
          <div className="flex h-[962px]">
            <Page />
            <Scrollbar />
          </div>
        </div>
      </div>
      <Taskbar />
    </div>
  );
}
